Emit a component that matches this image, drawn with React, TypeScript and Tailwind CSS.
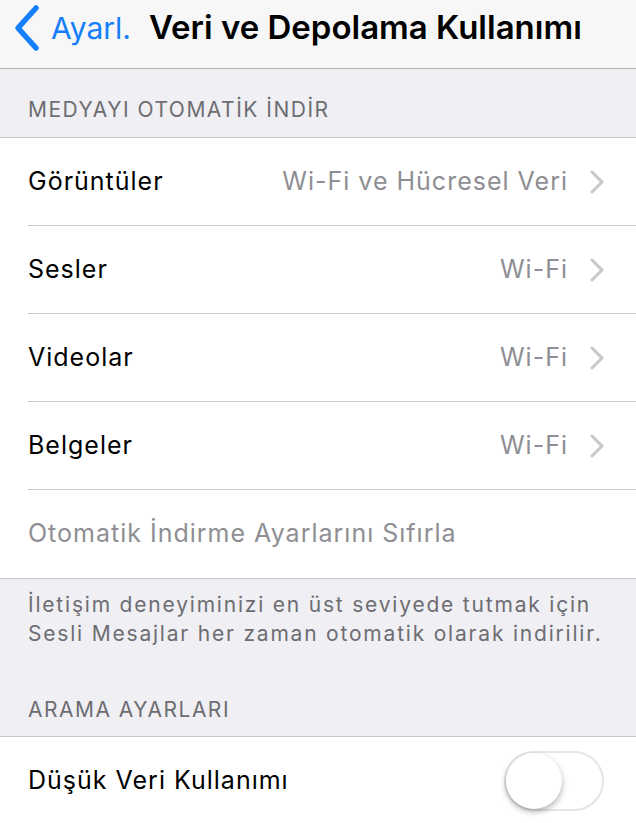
import React from 'react';

const font = { fontFamily: 'Inter, "Liberation Sans", sans-serif' };

function Chevron() {
    return (
        <svg width="14" height="24" viewBox="0 0 14 24" className="ml-[22px] shrink-0">
            <path d="M2 2 L12 12 L2 22" fill="none" stroke="#c7c7cc" strokeWidth="3" strokeLinecap="round" strokeLinejoin="round" />
        </svg>
    );
}

function Row({ label, value, last }: { label: string; value: string; last?: boolean }) {
    return (
        <div className="pl-7 bg-white">
            <div className={`h-[88px] flex items-center pr-8 ${last ? '' : 'border-b border-[#c8c7cc]'}`}>
                <span className="text-[25px] tracking-[1px] text-black flex-1">{label}</span>
                <span className="text-[25px] tracking-[1px] text-[#8e8e93]">{value}</span>
                <Chevron />
            </div>
        </div>
    );
}

export default function App() {
    return (
        <div className="w-[636px] h-[823px] overflow-hidden bg-[#efeff4]" style={font}>
            <div className="h-[69px] bg-[#f7f7f7] border-b border-[#b2b2b2] flex items-center">
                <div className="flex items-center pl-[13px] pb-[12px]">
                    <svg width="28" height="48" viewBox="0 0 28 48">
                        <path d="M23 4 L5 24 L23 44" fill="none" stroke="#157efb" strokeWidth="5.5" strokeLinecap="round" strokeLinejoin="round" />
                    </svg>
                    <span className="ml-[10px] text-[30px] text-[#157efb]">Ayarl.</span>
                    <span className="ml-[18px] text-[33px] font-semibold text-black">Veri ve Depolama Kullanımı</span>
                </div>
            </div>
            <div className="h-[68px] flex items-end pl-7 pb-[12px] text-[21px] tracking-[1.5px] text-[#6d6d72]">MEDYAYI OTOMATİK İNDİR</div>
            <div className="border-y border-[#c8c7cc]">
                <Row label="Görüntüler" value="Wi-Fi ve Hücresel Veri" />
                <Row label="Sesler" value="Wi-Fi" />
                <Row label="Videolar" value="Wi-Fi" />
                <Row label="Belgeler" value="Wi-Fi" />
                <div className="pl-7 bg-white h-[88px] flex items-center">
                    <span className="text-[25px] tracking-[1px] text-[#8e8e93]">Otomatik İndirme Ayarlarını Sıfırla</span>
                </div>
            </div>
            <div className="pl-7 pt-[11px] text-[21px] leading-[29px] tracking-[1.8px] text-[#6d6d72] whitespace-nowrap">
                İletişim deneyiminizi en üst seviyede tutmak için<br />Sesli Mesajlar her zaman otomatik olarak indirilir.
            </div>
            <div className="h-[88px] flex items-end pl-7 pb-[11px] text-[21px] tracking-[1.5px] text-[#6d6d72]">ARAMA AYARLARI</div>
            <div className="border-t border-[#c8c7cc] bg-white pl-7 pr-8 h-[88px] flex items-center">
                <span className="text-[25px] tracking-[1px] text-black flex-1">Düşük Veri Kullanımı</span>
                <div className="w-[100px] h-[60px] rounded-full border-2 border-[#e5e5ea] bg-white relative">
                    <div className="absolute left-0 top-0 w-[56px] h-[56px] rounded-full bg-white shadow-[0_3px_6px_rgba(0,0,0,0.3)]" />
                </div>
            </div>
        </div>
    );
}
